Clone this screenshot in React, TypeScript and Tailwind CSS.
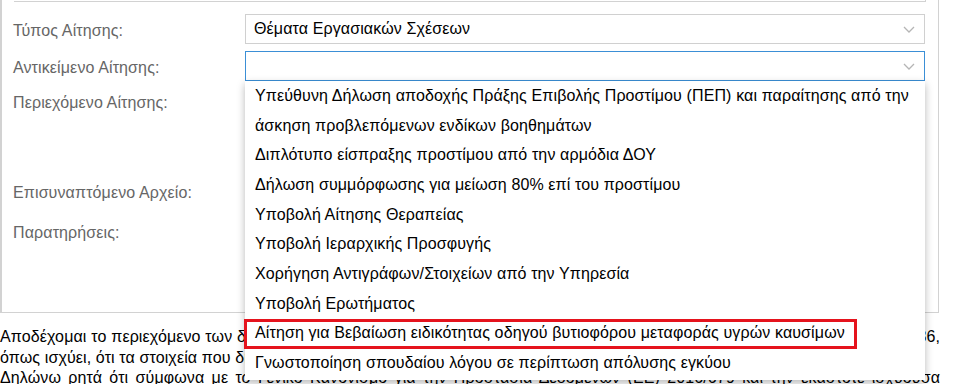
import { ReactNode } from 'react';

const OPTIONS = [
  'Υπεύθυνη Δήλωση αποδοχής Πράξης Επιβολής Προστίμου (ΠΕΠ) και παραίτησης από την άσκηση προβλεπόμενων ενδίκων βοηθημάτων',
  'Διπλότυπο είσπραξης προστίμου από την αρμόδια ΔΟΥ',
  'Δήλωση συμμόρφωσης για μείωση 80% επί του προστίμου',
  'Υποβολή Αίτησης Θεραπείας',
  'Υποβολή Ιεραρχικής Προσφυγής',
  'Χορήγηση Αντιγράφων/Στοιχείων από την Υπηρεσία',
  'Υποβολή Ερωτήματος',
  'Αίτηση για Βεβαίωση ειδικότητας οδηγού βυτιοφόρου μεταφοράς υγρών καυσίμων',
  'Γνωστοποίηση σπουδαίου λόγου σε περίπτωση απόλυσης εγκύου',
];

const HIGHLIGHTED = 7;

const Chevron = () => (
  <svg width="12" height="7" viewBox="0 0 12 7" className="shrink-0">
    <polyline points="1,1 6,6 11,1" fill="none" stroke="#b5b5b5" strokeWidth="1.3" />
  </svg>
);

const Label = ({ children, padTop }: { children: ReactNode; padTop?: boolean }) => (
  <div className={`w-[243px] shrink-0 pl-[11px] text-[#666] leading-[18px] ${padTop ? 'pt-[3px]' : ''}`}>
    {children}
  </div>
);

export default function App() {
  return (
    <div className="w-[960px] h-[384px] overflow-hidden bg-white text-[16px] tracking-[0.12px] font-['Liberation_Sans',Arial,sans-serif]">
      <div className="w-[939px] h-[313px] border-l-2 border-r border-b border-[#d2d2d2]">
        <div className="ml-[12px] w-[912px] h-[2px] border-b border-r border-[#d2d2d2]"></div>

        {/* Τύπος */}
        <div className="mt-[12px] flex items-center h-[30px]">
          <Label padTop>Τύπος Αίτησης:</Label>
          <div className="w-[680px] h-[30px] border border-[#d0d0d0] flex items-center justify-between pl-[8px] pr-[9px] text-black">
            <span>Θέματα Εργασιακών Σχέσεων</span>
            <Chevron />
          </div>
        </div>

        {/* Αντικείμενο */}
        <div className="mt-[7px] flex items-center h-[30px]">
          <Label padTop>Αντικείμενο Αίτησης:</Label>
          <div className="relative w-[680px] h-[30px]">
            <div className="h-full border border-[#3b8fd6] flex items-center justify-end pr-[9px]">
              <Chevron />
            </div>

            <ul className="absolute left-0 top-full z-10 w-[680px] bg-white pb-[2px] shadow-[0_3px_8px_rgba(0,0,0,0.28)] text-black">
              {OPTIONS.map((opt, i) => (
                <li key={opt} className="relative pl-[10px] pr-[10px] leading-[29.67px]">
                  {opt}
                  {i === HIGHLIGHTED && (
                    <span className="absolute -left-[1px] top-[1px] w-[613px] h-[30px] border-[3px] border-[#e5131d]"></span>
                  )}
                </li>
              ))}
            </ul>
          </div>
        </div>

        <div className="mt-[13px] flex h-[90px]">
          <Label>Περιεχόμενο Αίτησης:</Label>
          <div className="w-[680px] h-[80px] border border-[#d0d0d0]"></div>
        </div>

        <div className="flex h-[40px]">
          <Label>Επισυναπτόμενο Αρχείο:</Label>
          <div className="w-[680px] h-[30px] border border-[#d0d0d0]"></div>
        </div>

        <div className="flex h-[60px]">
          <Label>Παρατηρήσεις:</Label>
          <div className="w-[680px] h-[60px] border border-[#d0d0d0]"></div>
        </div>
      </div>

      <div className="w-[940px] mt-[14px] text-black leading-[20.5px]">
        <p className="[text-align-last:justify] text-justify whitespace-nowrap overflow-hidden">
          Αποδέχομαι το περιεχόμενο των δηλώσεών μου και δηλώνω υπεύθυνα, σύμφωνα με τις διατάξεις του άρθρου 8 του Ν. 1599/1986,
        </p>
        <p>όπως ισχύει, ότι τα στοιχεία που δηλώνω είναι αληθή και ακριβή.</p>
        <p className="text-justify">
          Δηλώνω ρητά ότι σύμφωνα με το Γενικό Κανονισμό για την Προστασία Δεδομένων (ΕΕ) 2016/679 και την εκάστοτε ισχύουσα νομοθεσία, συναινώ στην επεξεργασία των δεδομένων μου.
        </p>
      </div>
    </div>
  );
}
